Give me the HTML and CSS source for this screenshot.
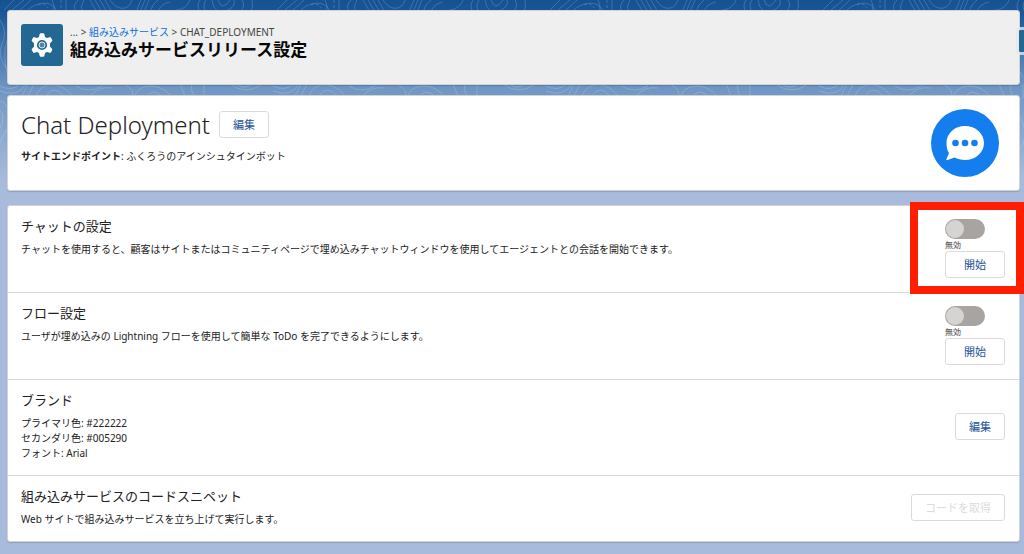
FILE: index.html
```html
<!DOCTYPE html>
<html lang="ja">
<head>
  <meta charset="UTF-8">
  <meta name="viewport" content="width=device-width, initial-scale=1.0">
  <title>組み込みサービスリリース設定</title>
  <link rel="stylesheet" href="styles.css">
</head>
<body>
  <!-- Contour line backdrop -->
  <svg class="backdrop" aria-hidden="true">
    <defs>
      <pattern id="contours" width="273" height="200" patternUnits="userSpaceOnUse">
        <g fill="none" stroke="#fff" stroke-opacity="0.17">
          <path d="M4 10L14 0M12 10L24 0M20 10L31 0M28 10C36 2 52 0 56 10M52 0Q56 8 52 14M66 0V12" />
          <path d="M38 5Q44 2 48 8M61 0V12" stroke-dasharray="3 2" />
          <path d="M78 0Q72 6 76 12M84 0Q80 6 82 12M90 0L98 14M95 0L103 14M100 0L108 14M105 0L113 14M110 0C116 10 128 12 132 0M136 12L141 0M140 12L145 0M144 12L149 0M150 12Q152 4 158 0M158 12Q160 4 170 2" />
          <path d="M190 0C188 6 182 10 176 10M200 0Q196 6 200 12M206 0Q202 6 206 12M212 0Q214 16 228 10Q236 6 234 0M218 0Q222 12 230 0M242 0Q246 6 240 12M252 0Q254 6 250 14" />
          <path d="M0 86Q12 92 20 84M0 91Q18 98 26 84M22 96L28 84M28 96L34 84M36 96C42 80 62 82 72 96M46 96Q54 84 64 96M76 86Q88 94 102 86M90 96Q98 86 112 88M124 84Q138 92 130 98M134 98C138 82 162 82 172 98M146 98Q152 86 164 98M180 84L186 98M192 84Q190 92 196 98M204 84L204 98M230 84Q246 96 262 84M236 84Q244 90 252 84" />
          <path d="M0 20Q8 32 2 44Q-3 56 6 68M-2 100C12 104 14 122 2 138Q-4 150 0 160M0 110Q6 118 0 128M7 40Q2 56 8 76" />
          <path d="M196 22Q206 34 200 48Q194 62 204 78M202 98Q196 110 204 124Q210 138 200 150" />
        </g>
      </pattern>
    </defs>
    <rect width="100%" height="150" fill="url(#contours)" />
  </svg>

  <header class="card page-header">
    <span class="header-icon">
      <svg viewBox="0 0 24 24" width="24" height="24" aria-hidden="true">
        <path fill="#fff" stroke="#fff" stroke-width="2.400" stroke-linejoin="round" d="M10.800 1.500h2.400l.8 3.200 2.800 1.600 3.100-1 1.200 2.100-2.300 2.500v4.200l2.300 2.500-1.200 2.100-3.100-1-2.800 1.600-.8 3.200h-2.400l-.8-3.200-2.800-1.600-3.100 1-1.200-2.100 2.300-2.500V9.900L2.900 7.400l1.200-2.100 3.100 1L10 4.700z" />
        <circle cx="12" cy="12" r="4.200" fill="#4d87ab" stroke="#236892" stroke-width="1.800" />
        <circle cx="12" cy="12" r="3" fill="none" stroke="#fff" stroke-width="0.800" />
      </svg>
    </span>
    <div class="header-text">
      <nav class="breadcrumb">... &gt; <a href="#">組み込みサービス</a> &gt; CHAT_DEPLOYMENT</nav>
      <h1>組み込みサービスリリース設定</h1>
    </div>
  </header>
  <button class="side-tab" type="button" aria-label="パネルを開く"></button>

  <main>
    <section class="card deployment">
      <div>
        <div class="deployment-title">
          <h2>Chat Deployment</h2>
          <button class="button" type="button">編集</button>
        </div>
        <p><strong>サイトエンドポイント</strong>: ふくろうのアインシュタインボット</p>
      </div>
      <svg class="chat-logo" viewBox="0 0 68 68" width="68" height="68" aria-hidden="true">
        <circle cx="34" cy="34" r="34" fill="#147eee" />
        <path fill="#fff" d="M34 17C44.500 17 53 24.500 53 34S44.500 51 34 51C30 51 26.500 50 23.500 48.500L16.500 51Q14.800 51.500 15.500 50L18 44C16 41 15.500 37.500 15.500 34C15.500 24.500 23.500 17 34 17Z" />
        <g fill="#147eee">
          <circle cx="24.500" cy="34" r="3.300" />
          <circle cx="34" cy="34" r="3.300" />
          <circle cx="43.500" cy="34" r="3.300" />
        </g>
      </svg>
    </section>

    <section class="card settings">
      <div class="row highlighted">
        <div>
          <h3>チャットの設定</h3>
          <p>チャットを使用すると、顧客はサイトまたはコミュニティページで埋め込みチャットウィンドウを使用してエージェントとの会話を開始できます。</p>
        </div>
        <div class="actions">
          <label class="toggle">
            <input type="checkbox" role="switch">
            <span>無効</span>
          </label>
          <button class="button wide" type="button">開始</button>
        </div>
      </div>
      <div class="row">
        <div>
          <h3>フロー設定</h3>
          <p>ユーザが埋め込みの Lightning フローを使用して簡単な ToDo を完了できるようにします。</p>
        </div>
        <div class="actions">
          <label class="toggle">
            <input type="checkbox" role="switch">
            <span>無効</span>
          </label>
          <button class="button wide" type="button">開始</button>
        </div>
      </div>
      <div class="row centered">
        <div>
          <h3>ブランド</h3>
          <p>プライマリ色: #222222</p>
          <p>セカンダリ色: #005290</p>
          <p>フォント: Arial</p>
        </div>
        <button class="button" type="button">編集</button>
      </div>
      <div class="row centered">
        <div>
          <h3>組み込みサービスのコードスニペット</h3>
          <p>Web サイトで組み込みサービスを立ち上げて実行します。</p>
        </div>
        <button class="button" type="button" disabled>コードを取得</button>
      </div>
    </section>
  </main>
</body>
</html>
```

FILE: styles.css
```css
*,
*::before,
*::after {
  margin: 0;
  padding: 0;
  box-sizing: border-box;
}

body {
  position: relative;
  min-height: 100vh;
  padding: 10px 4px 10px 7px;
  background: linear-gradient(#165292 0, #195696 12px, #7097c5 90px, #a8bbdc 180px) #a8bbdc no-repeat;
  color: #222;
  font-family: "Noto Sans", "Noto Sans CJK JP", sans-serif;
  font-size: 10px;
  line-height: 15px;
  overflow-x: hidden;
}

.backdrop {
  position: absolute;
  top: 0;
  left: 0;
  width: 100%;
  height: 150px;
  z-index: -1;
}

.card {
  background: #fff;
  border: 1px solid #d2d3d6;
  border-radius: 3px;
  box-shadow: 0 1px 1px rgba(0, 0, 0, 0.15);
}

/* Page header */
.page-header {
  display: flex;
  align-items: flex-start;
  gap: 7px;
  padding: 13px 13px 18px;
  margin-bottom: 10px;
  background: #efefef;
}

.header-icon {
  display: flex;
  align-items: center;
  justify-content: center;
  width: 42px;
  height: 42px;
  border-radius: 3px;
  background: #236892;
}

.breadcrumb {
  color: #444;
  padding-top: 1px;
}

.breadcrumb a {
  color: #0b72d9;
  text-decoration: none;
}

h1 {
  color: #080707;
  font-size: 17px;
  font-weight: 700;
  line-height: 20px;
}

/* Handle of the collapsed panel at the window edge */
.side-tab {
  position: absolute;
  top: 27px;
  right: -20px;
  width: 28px;
  height: 28px;
  border: 3px solid rgba(225, 232, 240, 0.8);
  border-radius: 4px;
  background: #236892;
  background-clip: padding-box;
  cursor: pointer;
}

.button {
  height: 27px;
  padding: 0 13px;
  border: 1px solid #dddbda;
  border-radius: 3px;
  background: #fff;
  color: #1b5297;
  font-family: inherit;
  font-size: 11px;
  line-height: 24px;
  white-space: nowrap;
  cursor: pointer;
}

.button.wide {
  padding: 0 18px;
}

.button:disabled {
  color: #dddbda;
  cursor: default;
}

/* Deployment summary */
.deployment {
  display: flex;
  align-items: flex-start;
  justify-content: space-between;
  padding: 13px 20px 13px 13px;
  margin-bottom: 14px;
}

.deployment-title {
  display: flex;
  align-items: center;
  gap: 9px;
  margin: 2px 0 11px;
}

h2 {
  font-size: 24px;
  font-weight: 300;
  line-height: 26px;
}

.deployment p {
  margin-bottom: 13px;
}

.chat-logo {
  display: block;
  flex: none;
}

/* Settings list */
.row {
  position: relative;
  display: flex;
  align-items: flex-start;
  justify-content: space-between;
  gap: 20px;
  padding: 12px 14px 14px 13px;
}

.row + .row {
  border-top: 1px solid #dddbda;
}

.row.centered {
  align-items: center;
}

h3 {
  margin-bottom: 8px;
  font-size: 13px;
  font-weight: 400;
  line-height: 16px;
}

.highlighted::after {
  content: "";
  position: absolute;
  top: -4px;
  right: -5px;
  bottom: -2px;
  z-index: 1;
  width: 114px;
  border: 8px solid #ff1e00;
  pointer-events: none;
}

.actions {
  display: flex;
  flex-direction: column;
  align-items: flex-start;
  padding-top: 1px;
}

.toggle {
  display: flex;
  flex-direction: column;
  color: #444;
  font-size: 8px;
  line-height: 12px;
  cursor: pointer;
}

.toggle input {
  appearance: none;
  width: 40px;
  height: 20px;
  border-radius: 10px;
  background: #a8a4a1;
  cursor: pointer;
}

.toggle input::before {
  content: "";
  display: block;
  width: 18px;
  height: 18px;
  margin: 1px;
  border-radius: 50%;
  background: #d6d4d2;
}

.toggle input:checked {
  background: #0070d2;
}

.toggle input:checked::before {
  margin-left: 21px;
}
```
